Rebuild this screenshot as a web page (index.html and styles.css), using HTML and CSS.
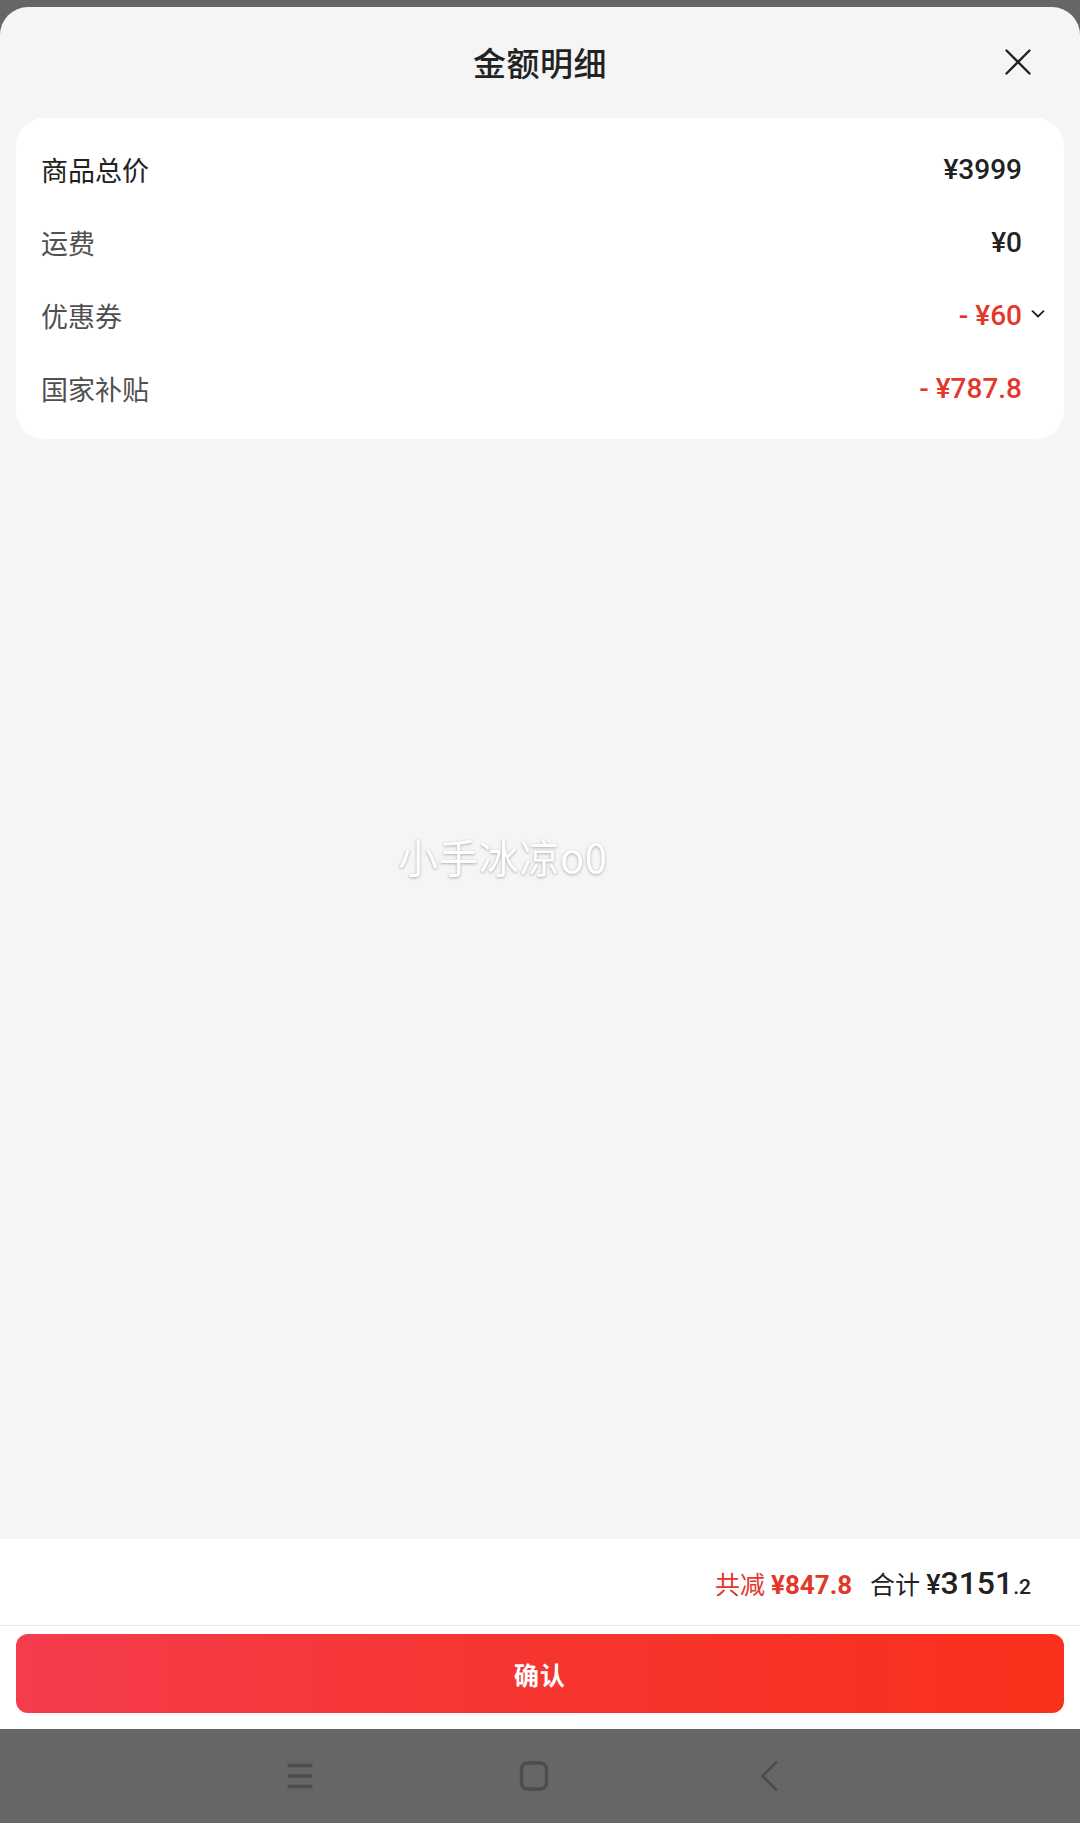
FILE: index.html
```html
<!DOCTYPE html>
<html lang="zh-CN">
<head>
<meta charset="utf-8">
<title>金额明细</title>
<link rel="stylesheet" href="styles.css">
</head>
<body>
<div class="screen">
  <div class="topbar"></div>
  <div class="sheet">
    <header class="sheet-header">
      <span class="header-side"></span>
      <h1 class="title">金额明细</h1>
      <span class="header-side header-right">
        <button class="close" aria-label="关闭">
          <svg width="26" height="26" viewBox="0 0 26 26"><path d="M1.5 1.5 L24.5 24.5 M24.5 1.5 L1.5 24.5" stroke="#222" stroke-width="2.4" stroke-linecap="round" fill="none"/></svg>
        </button>
      </span>
    </header>
    <section class="card">
      <div class="row"><span class="label label-strong">商品总价</span><span class="value">¥3999</span></div>
      <div class="row"><span class="label">运费</span><span class="value">¥0</span></div>
      <div class="row"><span class="label">优惠券</span><span class="value value-red">- ¥60<svg class="chev" width="14" height="8" viewBox="0 0 14 8"><path d="M1.5 1.2 L7 6.5 L12.5 1.2" stroke="#222" stroke-width="1.8" fill="none" stroke-linecap="round" stroke-linejoin="round"/></svg></span></div>
      <div class="row"><span class="label">国家补贴</span><span class="value value-red">- ¥787.8</span></div>
    </section>
    <div class="watermark">小手冰凉o0</div>
  </div>
  <footer class="footer">
    <div class="total">
      <span class="saved-label">共减</span>
      <span class="saved-amount">¥847.8</span>
      <span class="sum-label">合计</span>
      <span class="sum-yen">¥</span><span class="sum-int">3151</span><span class="sum-dec">.2</span>
    </div>
    <div class="btn-wrap"><button class="confirm">确认</button></div>
  </footer>
  <nav class="navbar">
    <svg class="nav-icon" width="28" height="28" viewBox="0 0 28 28"><path d="M3 3.5 H25 M3 14 H25 M3 24.5 H25" stroke="#4d4d4d" stroke-width="3.6" stroke-linecap="round"/></svg>
    <svg class="nav-icon" width="30" height="30" viewBox="0 0 30 30"><rect x="2.5" y="2" width="25" height="26" rx="6" stroke="#4d4d4d" stroke-width="3.4" fill="none"/></svg>
    <svg class="nav-icon" width="30" height="30" viewBox="0 0 30 30"><path d="M22 1.5 L8.5 15 L22 28.5" stroke="#4d4d4d" stroke-width="3" fill="none" stroke-linecap="round" stroke-linejoin="round"/></svg>
  </nav>
</div>
</body>
</html>
```

FILE: styles.css
```css
* { box-sizing: border-box; }
html, body { margin: 0; padding: 0; }
body {
  width: 1080px;
  height: 1823px;
  font-family: "Noto Sans CJK SC", "Noto Sans", sans-serif;
  background: #666;
  overflow: hidden;
}
.screen {
  width: 1080px;
  height: 1823px;
  display: flex;
  flex-direction: column;
  background: #666;
}
.topbar { height: 7px; flex: none; background: #666; }
.sheet {
  position: relative;
  flex: 1;
  background: #f5f5f5;
  border-radius: 28px 28px 0 0;
  display: flex;
  flex-direction: column;
}
.sheet-header {
  height: 110px;
  display: grid;
  grid-template-columns: 1fr auto 1fr;
  align-items: center;
}
.title {
  margin: 0;
  font-size: 33px;
  font-weight: 500;
  color: #222;
  letter-spacing: 0.5px;
}
.header-right { display: flex; justify-content: flex-end; padding-right: 49px; }
.close {
  border: 0; background: none; padding: 0; width: 26px; height: 26px;
  display: flex; align-items: center; justify-content: center;
}
.card {
  margin: 1px 16px 0;
  background: #fff;
  border-radius: 28px;
  padding: 15px 42px 14px 25px;
}
.row {
  height: 73px;
  display: flex;
  align-items: center;
  justify-content: space-between;
}
.label { font-size: 27px; color: #505050; }
.label-strong { color: #222; }
.value {
  font-family: "Roboto", "Noto Sans", sans-serif;
  font-size: 28px;
  font-weight: 500;
  color: #222;
  display: flex;
  align-items: center;
}
.value-red { color: #e4372b; }
.chev { margin-left: 9px; margin-right: -23px; margin-top: -4px; }
.watermark {
  position: absolute;
  left: 398px;
  top: 820px;
  font-size: 40px;
  font-weight: 400;
  color: #fff;
  text-shadow: 0 1px 3px rgba(0,0,0,0.28), 0 0 1px rgba(0,0,0,0.12);
  letter-spacing: 0.5px;
}
.footer { background: #fff; flex: none; }
.total {
  height: 87px;
  border-bottom: 1px solid #ececec;
  display: flex;
  align-items: baseline;
  justify-content: flex-end;
  padding: 25px 49px 0 0;
}
.saved-label { font-size: 25px; color: #e4372b; }
.saved-amount {
  font-family: "Roboto", sans-serif;
  font-size: 26px; font-weight: 700; color: #e4372b; margin-left: 6px;
}
.sum-label { font-size: 25px; color: #222; margin-left: 18px; }
.sum-yen { font-family: "Roboto", sans-serif; font-size: 27px; font-weight: 500; color: #222; margin-left: 6px; }
.sum-int { font-family: "Roboto", sans-serif; font-size: 32px; font-weight: 500; color: #222; }
.sum-dec { font-family: "Roboto", sans-serif; font-size: 21px; font-weight: 500; color: #222; }
.btn-wrap { padding: 8px 16px 16px; }
.confirm {
  width: 100%;
  height: 79px;
  border: 0;
  border-radius: 12px;
  background: linear-gradient(90deg, #f53c4d 0%, #f6352f 50%, #f9301b 100%);
  color: #fff;
  font-family: "Noto Sans CJK SC", sans-serif;
  font-size: 25px;
  font-weight: 700;
  letter-spacing: 1px;
}
.navbar {
  height: 94px;
  flex: none;
  background: #666;
  display: flex;
  align-items: center;
  padding-left: 286px;
  gap: 205px;
}
```
